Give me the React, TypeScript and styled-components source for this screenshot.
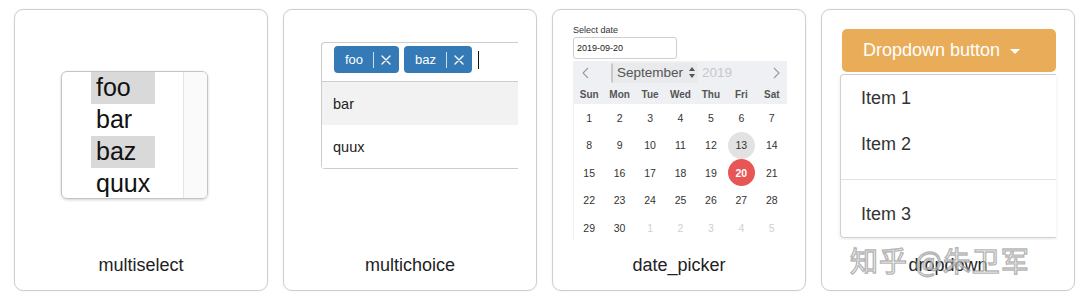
import React from "react";
import styled, { createGlobalStyle } from "styled-components";

const GlobalStyle = createGlobalStyle`
  html, body {
    margin: 0;
    padding: 0;
    background: #fff;
    font-family: "Liberation Sans", Arial, sans-serif;
    color: #222;
  }
  * {
    box-sizing: border-box;
  }
`;

const Page = styled.div`
  display: flex;
  gap: 15px;
  padding: 9px 0 0 14px;
  width: 1080px;
  height: 299px;
`;

const Card = styled.div`
  position: relative;
  width: 254px;
  height: 282px;
  border: 1px solid #cfcfcf;
  border-radius: 9px;
  box-shadow: 0 0 2px rgba(0, 0, 0, 0.08);
  display: flex;
  flex-direction: column;
  background: #fff;
`;

const Demo = styled.div<{ $pt: number; $pl: number }>`
  flex: 1;
  position: relative;
  overflow: hidden;
  padding: ${(p) => p.$pt}px 0 0 ${(p) => p.$pl}px;
`;

const Label = styled.div`
  height: 50px;
  display: flex;
  align-items: center;
  justify-content: center;
  font-size: 18px;
  color: #222;
`;

/* multiselect */
const SelectBox = styled.div`
  width: 147px;
  height: 128px;
  border: 1px solid #c4c4c4;
  border-radius: 6px;
  box-shadow: 0 1px 3px rgba(0, 0, 0, 0.18);
  display: flex;
  overflow: hidden;
`;

const SelectList = styled.div`
  flex: 1;
  padding-left: 29px;
`;

const SelectItem = styled.div<{ $selected?: boolean }>`
  width: 64px;
  height: 32px;
  padding-left: 5px;
  font-size: 25px;
  line-height: 30px;
  color: #111;
  background: ${(p) => (p.$selected ? "#d9d9d9" : "transparent")};
`;

const Scrollbar = styled.div`
  width: 24px;
  border-left: 1px solid #e4e4e4;
  background: #fafafa;
`;

/* multichoice */
const ChoiceBox = styled.div`
  width: 197px;
  border: 1px solid #cccccc;
  border-right: none;
  border-radius: 4px 0 0 4px;
`;

const TagRow = styled.div`
  height: 39px;
  padding: 3px 0 0 12px;
  display: flex;
  align-items: flex-start;
  gap: 5px;
  border-bottom: 1px solid #cccccc;
`;

const Tag = styled.div`
  height: 27px;
  display: flex;
  align-items: center;
  background: #337ab7;
  color: #fff;
  border-radius: 4px;
  font-size: 13px;
  padding: 0 8px 0 11px;
`;

const TagSep = styled.span`
  width: 1px;
  height: 16px;
  background: rgba(255, 255, 255, 0.75);
  margin: 0 7px 0 10px;
`;

const Cursor = styled.span`
  width: 1px;
  height: 18px;
  background: #111;
  margin: 5px 0 0 1px;
`;

const ChoiceRow = styled.div<{ $active?: boolean }>`
  height: 43px;
  display: flex;
  align-items: center;
  padding-left: 11px;
  font-size: 14.5px;
  color: #222;
  background: ${(p) => (p.$active ? "#f2f2f2" : "#fff")};
`;

/* date picker */
const FieldLabel = styled.div`
  font-size: 9px;
  line-height: 11px;
  color: #333;
`;

const DateInput = styled.div`
  width: 104px;
  height: 22px;
  margin-top: 1px;
  border: 1px solid #cfcfcf;
  border-radius: 3px;
  font-size: 9px;
  display: flex;
  align-items: center;
  padding-left: 3px;
  color: #222;
`;

const Calendar = styled.div`
  width: 214px;
  margin-top: 2px;
  border-left: 1px solid #f0f0f0;
`;

const CalHead = styled.div`
  background: #eef0f3;
`;

const MonthRow = styled.div`
  height: 23px;
  display: flex;
  align-items: center;
  padding: 0 7px 0 8px;
  font-size: 13.5px;
`;

const MonthSelect = styled.span`
  margin-left: 22px;
  padding: 0 3px 0 4px;
  height: 20px;
  display: flex;
  align-items: center;
  gap: 6px;
  color: #555;
  background: #e9eaec;
  border-left: 2px solid #c9c9c9;
  border-radius: 2px;
`;

const YearText = styled.span`
  color: #c8c8c8;
  margin-left: 4px;
  flex: 1;
`;

const Grid = styled.div<{ $h: number }>`
  display: grid;
  grid-template-columns: repeat(7, 1fr);
  grid-auto-rows: ${(p) => p.$h}px;
`;

const DayName = styled.div`
  display: flex;
  align-items: center;
  justify-content: center;
  font-size: 10px;
  font-weight: 600;
  color: #555;
`;

const DayCell = styled.div`
  display: flex;
  align-items: center;
  justify-content: center;
`;

const Day = styled.span<{ $kind: "normal" | "muted" | "hover" | "active" }>`
  width: 27px;
  height: 27px;
  border-radius: 50%;
  display: flex;
  align-items: center;
  justify-content: center;
  font-size: 10.5px;
  font-weight: ${(p) => (p.$kind === "active" ? 700 : 400)};
  color: ${(p) =>
    p.$kind === "muted" ? "#cfcfcf" : p.$kind === "active" ? "#fff" : "#333"};
  background: ${(p) =>
    p.$kind === "active" ? "#e85555" : p.$kind === "hover" ? "#e2e2e2" : "transparent"};
`;

/* dropdown */
const DropButton = styled.div`
  width: 214px;
  height: 43px;
  border-radius: 5px;
  background: #e9ad59;
  color: #fff;
  font-size: 18px;
  display: flex;
  align-items: center;
  padding-left: 21px;
  gap: 10px;
`;

const Caret = styled.span`
  width: 0;
  height: 0;
  border-left: 5px solid transparent;
  border-right: 5px solid transparent;
  border-top: 5px solid #fff;
  margin-top: 2px;
`;

const Menu = styled.div`
  width: 216px;
  margin: 2px 0 0 -2px;
  height: 164px;
  border: 1px solid #d0d0d0;
  border-right: none;
  border-radius: 4px 0 0 4px;
  box-shadow: 0 2px 4px rgba(0, 0, 0, 0.08);
`;

const MenuItem = styled.div`
  height: 46px;
  display: flex;
  align-items: center;
  padding-left: 20px;
  font-size: 18px;
  color: #333;
`;

const MenuDivider = styled.div`
  height: 1px;
  background: #e2e2e2;
  margin: 12px 0 11px;
`;

const Watermark = styled.div`
  position: absolute;
  left: 28px;
  top: 230px;
  font-family: "Noto Sans CJK SC", sans-serif;
  font-size: 28px;
  letter-spacing: 1px;
  color: rgba(255, 255, 255, 0.5);
  -webkit-text-stroke: 1.4px rgba(150, 150, 150, 0.7);
  pointer-events: none;
  white-space: nowrap;
`;

const dayNames = ["Sun", "Mon", "Tue", "Wed", "Thu", "Fri", "Sat"];

type DayKind = "normal" | "muted" | "hover" | "active";

const days: { n: number; kind: DayKind }[] = [
  ...Array.from({ length: 30 }, (_, i) => ({
    n: i + 1,
    kind: (i + 1 === 13 ? "hover" : i + 1 === 20 ? "active" : "normal") as DayKind,
  })),
  ...[1, 2, 3, 4, 5].map((n) => ({ n, kind: "muted" as DayKind })),
];

const CloseIcon = () => (
  <svg width="10" height="10" viewBox="0 0 10 10">
    <path d="M1 1 L9 9 M9 1 L1 9" stroke="#fff" strokeWidth="1.4" strokeLinecap="round" />
  </svg>
);

const Chevron = ({ dir }: { dir: "left" | "right" }) => (
  <svg width="7" height="12" viewBox="0 0 7 12">
    <path
      d={dir === "left" ? "M6 1 L1 6 L6 11" : "M1 1 L6 6 L1 11"}
      stroke="#9a9a9a"
      strokeWidth="1.1"
      fill="none"
    />
  </svg>
);

const App: React.FC = () => {
  return (
    <>
      <GlobalStyle />
      <Page>
        <Card>
          <Demo $pt={61} $pl={46}>
            <SelectBox>
              <SelectList>
                <SelectItem $selected>foo</SelectItem>
                <SelectItem>bar</SelectItem>
                <SelectItem $selected>baz</SelectItem>
                <SelectItem>quux</SelectItem>
              </SelectList>
              <Scrollbar />
            </SelectBox>
          </Demo>
          <Label>multiselect</Label>
        </Card>

        <Card>
          <Demo $pt={32} $pl={37}>
            <ChoiceBox>
              <TagRow>
                <Tag>
                  foo
                  <TagSep />
                  <CloseIcon />
                </Tag>
                <Tag>
                  baz
                  <TagSep />
                  <CloseIcon />
                </Tag>
                <Cursor />
              </TagRow>
              <ChoiceRow $active>bar</ChoiceRow>
              <ChoiceRow>quux</ChoiceRow>
            </ChoiceBox>
          </Demo>
          <Label>multichoice</Label>
        </Card>

        <Card>
          <Demo $pt={15} $pl={20}>
            <FieldLabel>Select date</FieldLabel>
            <DateInput>2019-09-20</DateInput>
            <Calendar>
              <CalHead>
                <MonthRow>
                  <Chevron dir="left" />
                  <MonthSelect>
                    September
                    <svg width="6" height="11" viewBox="0 0 6 11">
                      <path d="M3 0 L6 4 L0 4 Z M3 11 L6 7 L0 7 Z" fill="#555" />
                    </svg>
                  </MonthSelect>
                  <YearText>2019</YearText>
                  <Chevron dir="right" />
                </MonthRow>
                <Grid $h={20}>
                  {dayNames.map((d) => (
                    <DayName key={d}>{d}</DayName>
                  ))}
                </Grid>
              </CalHead>
              <Grid $h={27.5}>
                {days.map((d, i) => (
                  <DayCell key={i}>
                    <Day $kind={d.kind}>{d.n}</Day>
                  </DayCell>
                ))}
              </Grid>
            </Calendar>
          </Demo>
          <Label>date_picker</Label>
        </Card>

        <Card>
          <Demo $pt={19} $pl={20}>
            <DropButton>
              Dropdown button
              <Caret />
            </DropButton>
            <Menu>
              <MenuItem>Item 1</MenuItem>
              <MenuItem>Item 2</MenuItem>
              <MenuDivider />
              <MenuItem>Item 3</MenuItem>
            </Menu>
          </Demo>
          <Label>dropdown</Label>
          <Watermark>知乎 @朱卫军</Watermark>
        </Card>
      </Page>
    </>
  );
};

export default App;
